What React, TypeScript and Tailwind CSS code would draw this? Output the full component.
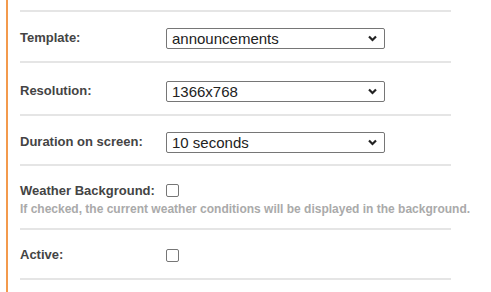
import type { ReactNode } from 'react';

const FONT = { fontFamily: '"Liberation Sans", Arial, sans-serif' };

function Row({ label, children, className }: { label: string; children: ReactNode; className?: string }) {
  return (
    <div className={`flex items-center border-t-2 border-[#e5e5e5] ${className ?? ''}`}>
      <div className="relative -top-[1px] w-[146px] shrink-0 text-[13px] font-bold text-[#444] leading-[15px]">{label}</div>
      {children}
    </div>
  );
}

function Select({ value }: { value: string }) {
  return (
    <div className="relative w-[219px] h-[21px] border border-[#767676] rounded-[2px] bg-white flex items-center pl-[5px]">
      <span className="text-[15px] leading-[17px] text-[#222]">{value}</span>
      <svg className="absolute right-[7px] top-[6px]" width="9" height="7" viewBox="0 0 9 7">
        <path d="M1 1.5 L4.5 5 L8 1.5" fill="none" stroke="#222" strokeWidth="2.2" />
      </svg>
    </div>
  );
}

function Checkbox() {
  return <div className="w-[13px] h-[13px] border border-[#767676] rounded-[2px] bg-white" />;
}

export default function App() {
  return (
    <div className="w-[491px] h-[292px] bg-white overflow-hidden" style={FONT}>
      <div className="ml-[6px] h-full border-l-2 border-[#f39a4c] pl-[12px] pt-[10px]">
        <div className="w-[431px]">
          <Row label="Template:" className="pt-[16px] pb-[12px]">
            <Select value="announcements" />
          </Row>
          <Row label="Resolution:" className="pt-[18px] pb-[12px]">
            <Select value="1366x768" />
          </Row>
          <Row label="Duration on screen:" className="pt-[16px] pb-[11px]">
            <Select value="10 seconds" />
          </Row>

          {/* weather */}
          <div className="border-t-2 border-[#e5e5e5] pt-[17px] pb-[12px]">
            <div className="flex items-center">
              <div className="w-[146px] shrink-0 text-[13px] font-bold text-[#444] leading-[15px]">Weather Background:</div>
              <Checkbox />
            </div>
            <div className="mt-[4px] text-[12px] font-bold text-[#aaa] leading-[14px] whitespace-nowrap">
              If checked, the current weather conditions will be displayed in the background.
            </div>
          </div>

          <Row label="Active:" className="pt-[18px] pb-[15px]">
            <Checkbox />
          </Row>
          <div className="border-t-2 border-[#e5e5e5]" />
        </div>
      </div>
    </div>
  );
}
